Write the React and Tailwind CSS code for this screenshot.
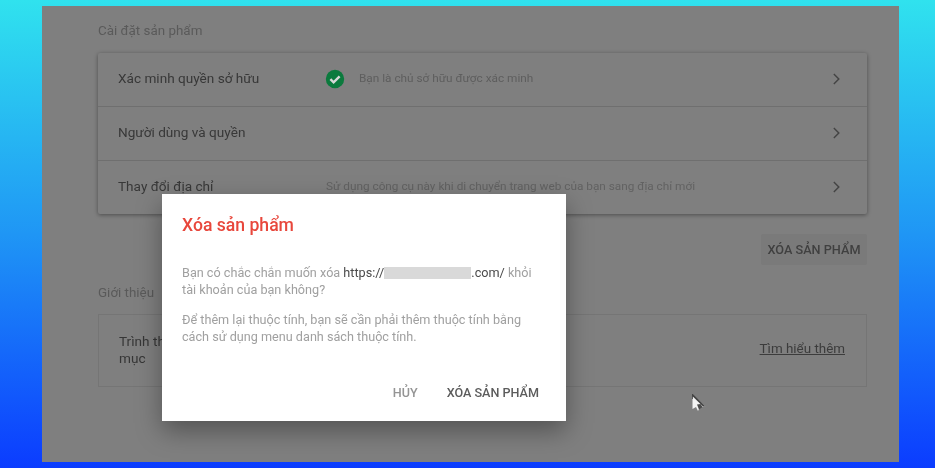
import React from "react";

function Chevron() {
  return (
    <svg width="20" height="20" viewBox="0 0 24 24" className="mr-[3px] shrink-0" fill="#444444">
      <path d="M8.8 6.6 10 5.4 16.6 12 10 18.6l-1.2-1.2L14.2 12z" />
    </svg>
  );
}

function Row({ label, children, last }) {
  return (
    <div className={"flex h-[54px] items-center pl-[20px] pr-[18px] " + (last ? "pb-[3px]" : "pb-[2px] border-b border-[#6f6f6f]")}>
      <div className="w-[208px] shrink-0 text-[13.6px] text-[#383838]">{label}</div>
      <div className="flex min-w-0 flex-1 items-center text-[11.8px] text-[#5e5e5e]">{children}</div>
      <Chevron />
    </div>
  );
}

export default function App() {
  return (
    <div
      className="relative h-[468px] w-[935px] overflow-hidden bg-[linear-gradient(180deg,#30e2ee_0%,#1f96f5_50%,#0b3cff_100%)] pt-[6px] pl-[42px] pr-[36px] pb-[6px] text-[14px]"
      style={{ fontFamily: "Roboto, 'Noto Sans', sans-serif" }}
    >
      <div className="h-[456px] bg-[#7f7f7f] pt-[17px] pl-[56px] pr-[32px] blur-[0.5px]">
        <h2 className="h-[16px] text-[13.4px] leading-[16px] font-normal text-[#5a5a5a]">Cài đặt sản phẩm</h2>
        <div className="mt-[14px] h-[161px] rounded-[2px] bg-[#7f7f7f] shadow-[0_1px_4px_rgba(0,0,0,0.4)]">
          <Row label="Xác minh quyền sở hữu">
            <svg width="20" height="20" viewBox="0 0 20 20" className="ml-[-1px] mr-[14px] mt-[1px] shrink-0">
              <circle cx="10" cy="10" r="9.2" fill="#0b7a3d" />
              <path d="M5.4 10.2 8.6 13.4 14.6 7.4" fill="none" stroke="#d8d8d8" strokeWidth="2.4" />
            </svg>
            <span>Bạn là chủ sở hữu được xác minh</span>
          </Row>
          <Row label="Người dùng và quyền" />
          <Row label="Thay đổi địa chỉ" last>
            <span className="text-[#626262]">Sử dụng công cụ này khi di chuyển trang web của bạn sang địa chỉ mới</span>
          </Row>
        </div>
        <div className="mt-[20px] flex justify-end">
          <div className="flex h-[31px] w-[106px] items-center justify-center rounded-[2px] bg-[#7a7a7a] text-[12.7px] font-medium text-[#404040]">
            XÓA SẢN PHẨM
          </div>
        </div>
        <h2 className="mt-[20px] h-[16px] text-[13.4px] leading-[16px] font-normal text-[#5a5a5a]">Giới thiệu</h2>
        <div className="mt-[13px] flex h-[73px] items-center justify-between border border-[#757575] pb-[2px] pl-[20px] pr-[21px]">
          <div className="w-[43px] whitespace-nowrap text-[13.6px] leading-[17px] text-[#363636]">
            Trình th
            <br />
            mục
          </div>
          <a className="text-[13.4px] text-[#3c3c3c] underline">Tìm hiểu thêm</a>
        </div>
      </div>

      <div className="absolute top-[194px] left-[162px] flex h-[227px] w-[404px] flex-col bg-white px-[20px] shadow-[0_10px_24px_rgba(0,0,0,0.35)]">
        <div className="flex h-full flex-col blur-[0.4px]">
          <h1 className="mt-[21px] text-[17.6px] leading-[20px] font-medium text-[#e8473c]">Xóa sản phẩm</h1>
          <p className="mt-[29px] text-[12.65px] leading-[17px] text-[#a0a0a0]">
            Bạn có chắc chắn muốn xóa <span className="text-[#4a4a4a]">https://</span>
            <span className="inline-block h-[12px] w-[87px] bg-[#d9d9d9] align-[-2px]" />
            <span className="text-[#4a4a4a]">.com/</span> khỏi
            <br />
            tài khoản của bạn không?
          </p>
          <p className="mt-[13px] text-[12.65px] leading-[17px] text-[#a0a0a0]">
            Để thêm lại thuộc tính, bạn sẽ cần phải thêm thuộc tính bằng
            <br />
            cách sử dụng menu danh sách thuộc tính.
          </p>
          <div className="mt-auto mb-[20px] flex justify-end gap-[29px] pr-[7px] text-[12.6px] leading-[16px] font-medium">
            <span className="text-[#959595]">HỦY</span>
            <span className="text-[#5c5c5c]">XÓA SẢN PHẨM</span>
          </div>
        </div>
      </div>

      <svg width="16" height="20" viewBox="0 0 16 20" className="absolute top-[394px] left-[691px] blur-[0.4px]">
        <path d="M1.5 0.5 L1.5 15 L5 13 L7 17 L9 13 L14.5 12.5 Z" fill="#f2f2f2" />
        <path d="M1 0 L1.8 0 L14.5 12.5 L12 12.5 L1.8 2.5 L1.8 5 L1 5 Z" fill="#444444" />
        <path d="M6 10.5 L9.5 10 L11.5 13 L8 15.5 Z" fill="#4a4a4a" />
      </svg>
    </div>
  );
}
